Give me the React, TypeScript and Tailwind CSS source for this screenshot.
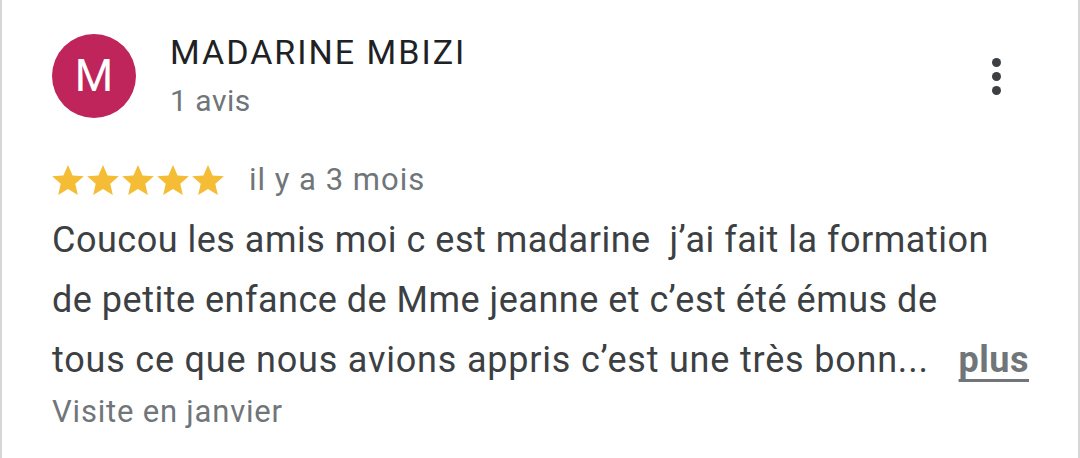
import React from "react";

function Star() {
  return (
    <svg viewBox="0 0 24 24" className="w-[38px] h-[38px] -mx-[1.5px]" fill="#f5bc35">
      <path d="M12 2.5l2.9 6.6 7.1.6-5.4 4.7 1.6 7-6.2-3.7-6.2 3.7 1.6-7L2 9.7l7.1-.6z" />
    </svg>
  );
}

export default function App() {
  return (
    <div
      className="w-[1080px] h-[458px] bg-white border-x-2 border-[#d6d6d6] overflow-hidden"
      style={{ fontFamily: "Roboto, 'Noto Sans', sans-serif" }}
    >
      <div className="pl-[50px] pr-[50px] pt-[34px]">
        <div className="flex items-start">
          <div className="w-[84px] h-[84px] rounded-full bg-[#bf255b] flex items-center justify-center text-white text-[44px] leading-none shrink-0">
            M
          </div>
          <div className="ml-[34px] flex-1">
            <div className="text-[34px] leading-[40px] tracking-[2px] text-[#202124] -mt-[2px]">MADARINE MBIZI</div>
            <div className="text-[30px] leading-[40px] tracking-[0.5px] text-[#70757a] mt-[9px]">1 avis</div>
          </div>
          <div className="flex flex-col items-center gap-[5px] mt-[24px] mr-[27px]">
            <span className="w-[9px] h-[9px] rounded-full bg-[#3c4043]" />
            <span className="w-[9px] h-[9px] rounded-full bg-[#3c4043]" />
            <span className="w-[9px] h-[9px] rounded-full bg-[#3c4043]" />
          </div>
        </div>
        <div className="flex items-center mt-[39px]">
          <div className="flex -ml-[2px]">
            <Star />
            <Star />
            <Star />
            <Star />
            <Star />
          </div>
          <span className="ml-[24px] text-[31px] leading-[40px] tracking-[1px] text-[#70757a]">il y a 3 mois</span>
        </div>
        <div className="mt-[10px] text-[36px] leading-[60px] tracking-[0.5px] text-[#3c4043] whitespace-pre">
          <div>Coucou les amis moi c est madarine  j’ai fait la formation</div>
          <div>de petite enfance de Mme jeanne et c’est été émus de</div>
          <div className="flex w-[977px]">
            <span className="tracking-[0.8px]">tous ce que nous avions appris c’est une très bonn...</span>
            <span className="ml-auto font-bold text-[#70757a] underline underline-offset-[7px] decoration-[3px]">plus</span>
          </div>
        </div>
        <div className="text-[31px] leading-[40px] tracking-[0.8px] text-[#70757a] mt-[2px]">Visite en janvier</div>
      </div>
    </div>
  );
}
